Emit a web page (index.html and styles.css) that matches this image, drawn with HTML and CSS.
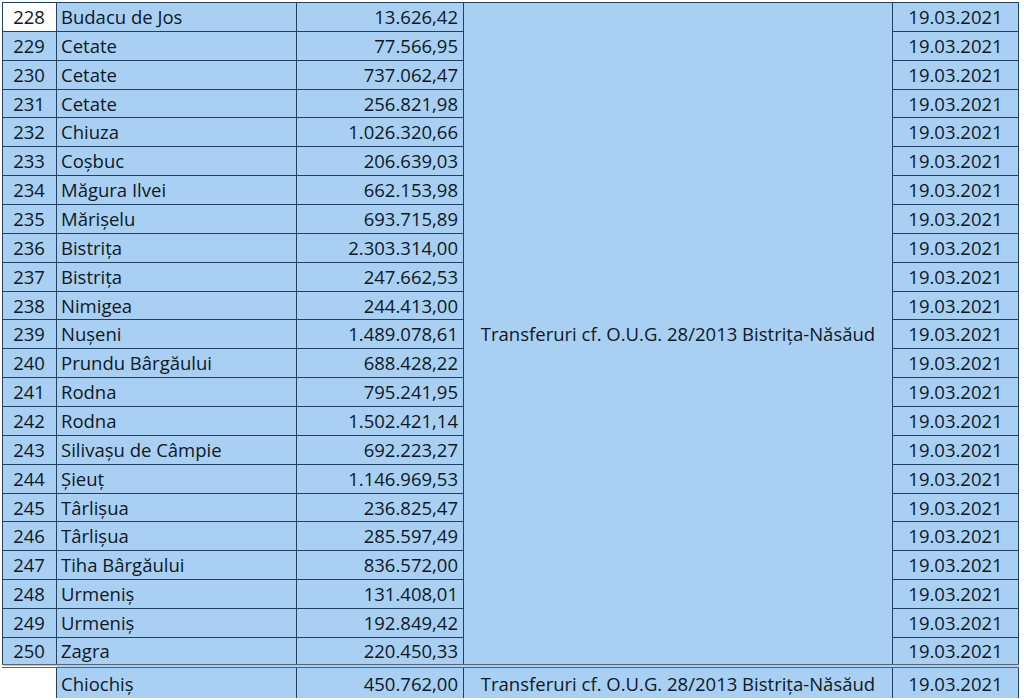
FILE: index.html
```html
<!DOCTYPE html>
<html lang="ro">
<head>
<meta charset="utf-8">
<title>Transferuri</title>
<link rel="stylesheet" href="styles.css">
</head>
<body>
<table class="sheet">
<colgroup>
<col class="c-nr"><col class="c-name"><col class="c-sum"><col class="c-desc"><col class="c-date">
</colgroup>
<tbody>
<tr><td class="nr first">228</td><td class="name">Budacu de Jos</td><td class="sum">13.626,42</td><td class="desc" rowspan="23">Transferuri cf. O.U.G. 28/2013 Bistrița-Năsăud</td><td class="date">19.03.2021</td></tr>
<tr><td class="nr">229</td><td class="name">Cetate</td><td class="sum">77.566,95</td><td class="date">19.03.2021</td></tr>
<tr><td class="nr">230</td><td class="name">Cetate</td><td class="sum">737.062,47</td><td class="date">19.03.2021</td></tr>
<tr><td class="nr">231</td><td class="name">Cetate</td><td class="sum">256.821,98</td><td class="date">19.03.2021</td></tr>
<tr><td class="nr">232</td><td class="name">Chiuza</td><td class="sum">1.026.320,66</td><td class="date">19.03.2021</td></tr>
<tr><td class="nr">233</td><td class="name">Coşbuc</td><td class="sum">206.639,03</td><td class="date">19.03.2021</td></tr>
<tr><td class="nr">234</td><td class="name">Măgura Ilvei</td><td class="sum">662.153,98</td><td class="date">19.03.2021</td></tr>
<tr><td class="nr">235</td><td class="name">Mărişelu</td><td class="sum">693.715,89</td><td class="date">19.03.2021</td></tr>
<tr><td class="nr">236</td><td class="name">Bistriţa</td><td class="sum">2.303.314,00</td><td class="date">19.03.2021</td></tr>
<tr><td class="nr">237</td><td class="name">Bistriţa</td><td class="sum">247.662,53</td><td class="date">19.03.2021</td></tr>
<tr><td class="nr">238</td><td class="name">Nimigea</td><td class="sum">244.413,00</td><td class="date">19.03.2021</td></tr>
<tr><td class="nr">239</td><td class="name">Nuşeni</td><td class="sum">1.489.078,61</td><td class="date">19.03.2021</td></tr>
<tr><td class="nr">240</td><td class="name">Prundu Bârgăului</td><td class="sum">688.428,22</td><td class="date">19.03.2021</td></tr>
<tr><td class="nr">241</td><td class="name">Rodna</td><td class="sum">795.241,95</td><td class="date">19.03.2021</td></tr>
<tr><td class="nr">242</td><td class="name">Rodna</td><td class="sum">1.502.421,14</td><td class="date">19.03.2021</td></tr>
<tr><td class="nr">243</td><td class="name">Silivaşu de Câmpie</td><td class="sum">692.223,27</td><td class="date">19.03.2021</td></tr>
<tr><td class="nr">244</td><td class="name">Şieuţ</td><td class="sum">1.146.969,53</td><td class="date">19.03.2021</td></tr>
<tr><td class="nr">245</td><td class="name">Târlişua</td><td class="sum">236.825,47</td><td class="date">19.03.2021</td></tr>
<tr><td class="nr">246</td><td class="name">Târlişua</td><td class="sum">285.597,49</td><td class="date">19.03.2021</td></tr>
<tr><td class="nr">247</td><td class="name">Tiha Bârgăului</td><td class="sum">836.572,00</td><td class="date">19.03.2021</td></tr>
<tr><td class="nr">248</td><td class="name">Urmeniş</td><td class="sum">131.408,01</td><td class="date">19.03.2021</td></tr>
<tr><td class="nr">249</td><td class="name">Urmeniş</td><td class="sum">192.849,42</td><td class="date">19.03.2021</td></tr>
<tr class="last"><td class="nr">250</td><td class="name">Zagra</td><td class="sum">220.450,33</td><td class="date">19.03.2021</td></tr>
</tbody>
<tfoot>
<tr class="foot"><td class="blank"></td><td class="name">Chiochiş</td><td class="sum">450.762,00</td><td class="desc">Transferuri cf. O.U.G. 28/2013 Bistrița-Năsăud</td><td class="date">19.03.2021</td></tr>
</tfoot>
</table>
</body>
</html>
```

FILE: styles.css
```css
html, body {
  margin: 0;
  padding: 0;
  background: #ffffff;
}

body {
  padding: 2px 0 0 2px;
  font-family: "Open Sans", "Liberation Sans", sans-serif;
  font-size: 18.5px;
  color: #0e1826;
}

.sheet {
  border-collapse: collapse;
  table-layout: fixed;
  width: 1016px;
  border-top: 1px solid #8a8f96;
}

.c-nr { width: 54px; }
.c-name { width: 240px; }
.c-sum { width: 167px; }
.c-desc { width: 429px; }
.c-date { width: 126px; }

.sheet td {
  background: #a9d0f2;
  border: 1px solid #22405f;
  height: 28.87px;
  padding: 0 5px;
  line-height: 20px;
  white-space: nowrap;
  box-sizing: border-box;
}

.sheet td.nr {
  text-align: center;
  padding: 0 1px 0 0;
}

.sheet td.first {
  background: #ffffff;
}

.sheet td.name {
  text-align: left;
  padding-left: 4px;
}

.sheet td.sum {
  text-align: right;
  padding-right: 5px;
}

.sheet td.desc {
  text-align: center;
  vertical-align: middle;
  padding: 0;
}

.sheet td.date {
  text-align: center;
  padding: 0;
}

.sheet tr.last td {
  border-bottom: 4px double #5a6470;
}

.sheet tr.foot td {
  border-top: 4px double #5a6470;
  border-bottom: none;
  height: 32px;
  padding-top: 2px;
}

.sheet tr.foot td.blank {
  background: #ffffff;
  border-left: none;
  border-bottom: none;
}
```
